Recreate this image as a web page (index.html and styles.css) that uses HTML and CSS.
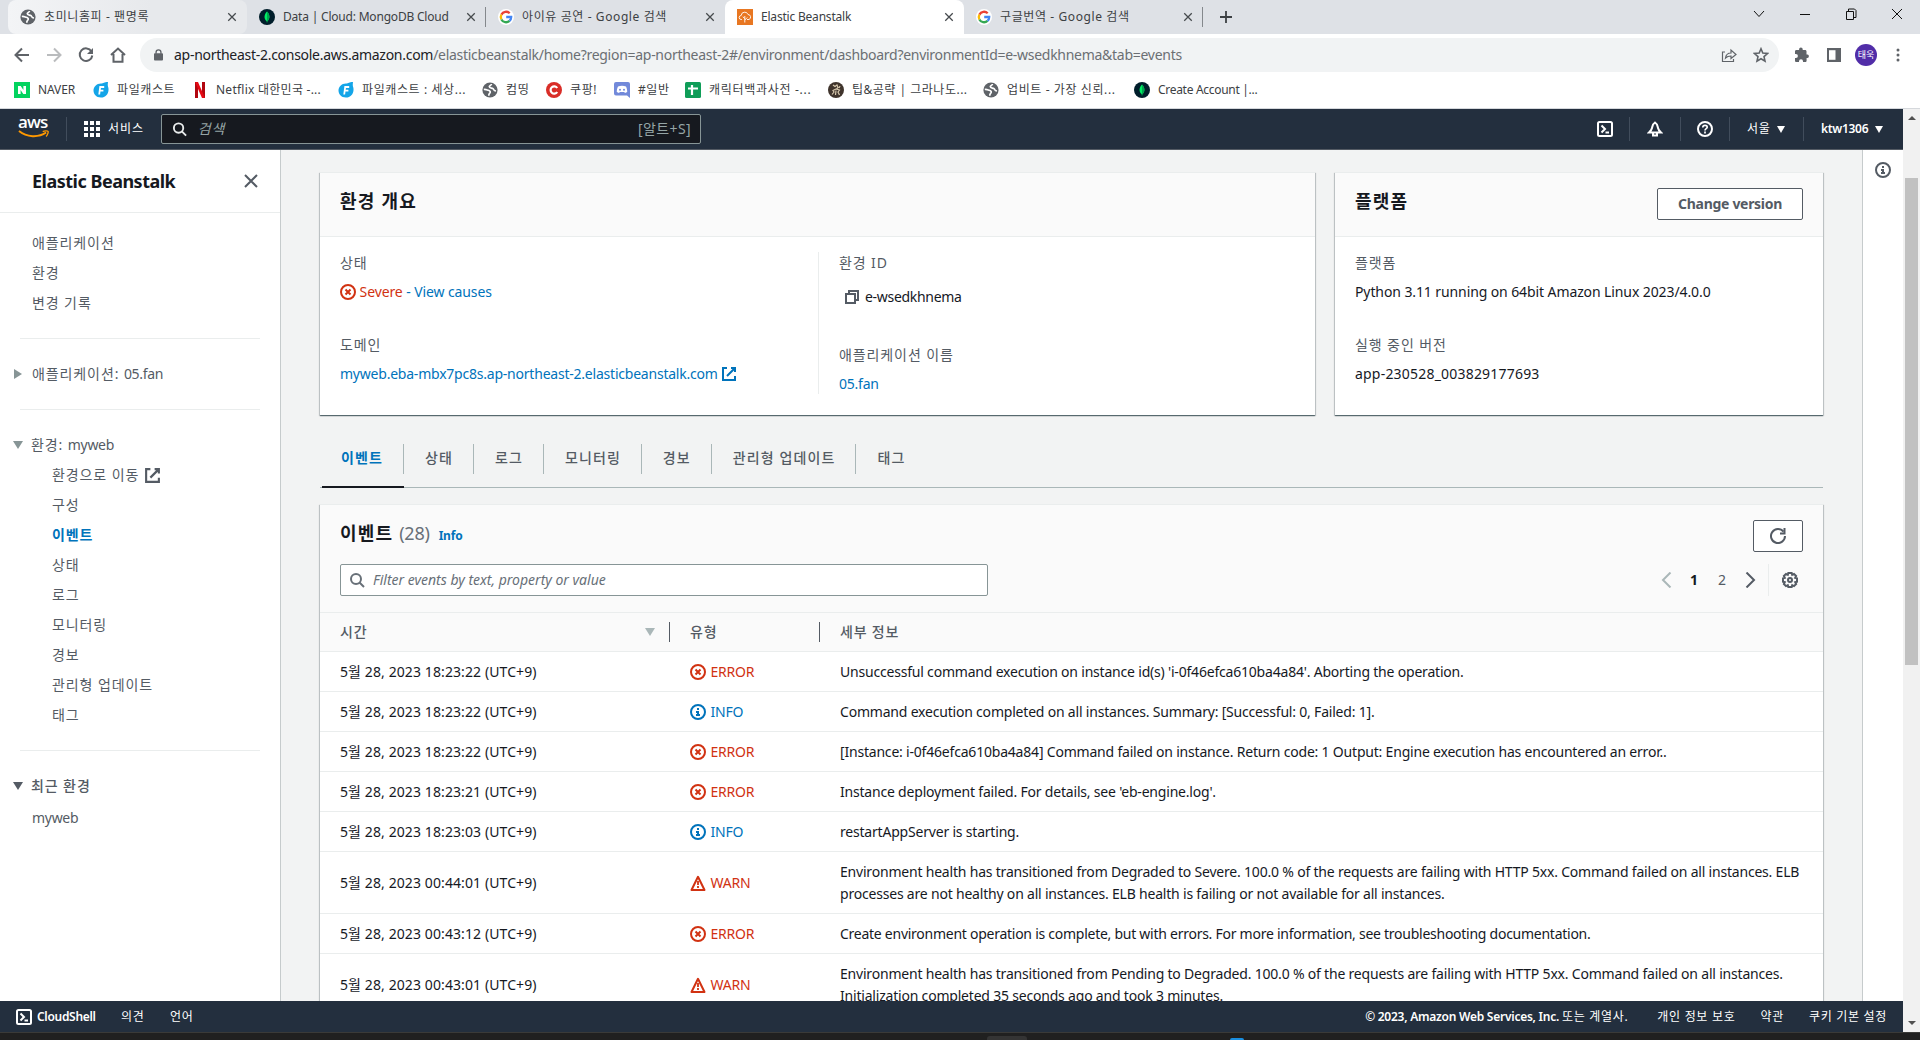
FILE: index.html
```
<!DOCTYPE html>
<html lang="ko">

<head>
    <meta charset="UTF-8">
    <meta name="viewport" content="width=device-width, initial-scale=1.0">
    <title>Elastic Beanstalk</title>
    <link rel="stylesheet" href="styles.css">
</head>

<body>

    <!-- Shared icons -->
    <svg class="sprite" width="0" height="0">
        <symbol id="i-globe" viewBox="0 0 16 16">
            <circle cx="8" cy="8" r="7.6" fill="#5f6368" />
            <path d="M1.800 7.500c1.700-.4 3 .3 4.300.7 1.400.4 2.400.6 2.100 2-.3 1.200-1.600 1.300-1.400 3.600" fill="none" stroke="#fff" stroke-width="1.700" />
            <path d="M9.500 2c-.2 1.600-2.300 1.300-2.200 2.800.1 1.600 2.500 1 3.700 1.800 1 .7.300 2.200 3 2.400" fill="none" stroke="#fff" stroke-width="1.700" />
        </symbol>
        <symbol id="i-mongo" viewBox="0 0 16 16">
            <circle cx="8" cy="8" r="8" fill="#001e2b" />
            <path d="M8 2.500c3.200 3.300 3.200 7.300.4 9.600L8 14l-.4-1.900C4.800 9.800 4.800 5.800 8 2.500z" fill="#00ed64" />
            <path d="M8 2.500v11.500l.4-1.900c2.800-2.300 2.800-6.300-.4-9.600z" fill="#00a84f" />
        </symbol>
        <symbol id="i-google" viewBox="0 0 16 16">
            <circle cx="8" cy="8" r="8" fill="#fff" />
            <g fill="none" stroke-width="2.300">
                <path d="M11.700 4.300A5.200 5.200 0 0 0 3.400 5.600" stroke="#ea4335" />
                <path d="M3.400 5.600a5.200 5.200 0 0 0 0 4.800" stroke="#fbbc05" />
                <path d="M3.400 10.400a5.200 5.200 0 0 0 8.100 1.500" stroke="#34a853" />
                <path d="M11.500 11.900A5.200 5.200 0 0 0 13.200 8H8.200" stroke="#4285f4" />
            </g>
        </symbol>
        <symbol id="i-filecast" viewBox="0 0 16 16">
            <path d="M8 1.500c2.500 0 3-1.300 7-1.500-.2 2.500-.5 3 .3 5.500C16.500 11 13 15.500 8 15.500S.5 12 .5 8.500 3.500 1.500 8 1.500z" fill="#14a5e8" />
            <path d="M6.200 12.500l1-7.500h4M6.800 8.700h3.600" fill="none" stroke="#fff" stroke-width="1.800" />
        </symbol>
        <symbol id="i-close" viewBox="0 0 16 16">
            <path d="M2 2l12 12M14 2L2 14" fill="none" stroke="currentColor" stroke-width="2" />
        </symbol>
        <symbol id="i-search" viewBox="0 0 16 16">
            <circle cx="7" cy="7" r="5" fill="none" stroke="currentColor" stroke-width="2" />
            <path d="M10.500 10.500L15 15" fill="none" stroke="currentColor" stroke-width="2" />
        </symbol>
        <symbol id="i-external" viewBox="0 0 16 16">
            <path d="M10 2h4v4M6 10l8-8" fill="none" stroke="currentColor" stroke-width="2" />
            <path d="M6 2H2v12h12v-4" fill="none" stroke="currentColor" stroke-width="2" />
        </symbol>
        <symbol id="i-error" viewBox="0 0 16 16">
            <circle cx="8" cy="8" r="7" fill="none" stroke="currentColor" stroke-width="2" />
            <path d="M5.500 5.500l5 5M10.500 5.500l-5 5" fill="none" stroke="currentColor" stroke-width="2" />
        </symbol>
        <symbol id="i-info" viewBox="0 0 16 16">
            <circle cx="8" cy="8" r="7" fill="none" stroke="currentColor" stroke-width="2" />
            <path d="M8 11V8H6M10 11H6M8 6V4" fill="none" stroke="currentColor" stroke-width="2" />
        </symbol>
        <symbol id="i-warn" viewBox="0 0 16 16">
            <path d="M8 1.800l6.500 13.200h-13z" fill="none" stroke="currentColor" stroke-width="2" stroke-linejoin="round" />
            <path d="M8 6v4M8 11v2" fill="none" stroke="currentColor" stroke-width="1.800" />
        </symbol>
        <symbol id="i-shell" viewBox="0 0 16 16">
            <rect x="1" y="1" width="14" height="14" rx="1.500" fill="none" stroke="currentColor" stroke-width="2" />
            <path d="M4.500 4.500L8 8l-3.500 3.500M8.500 11.500H12" fill="none" stroke="currentColor" stroke-width="2" />
        </symbol>
    </svg>

    <!-- Browser tabs -->
    <div class="tab-strip">
        <div class="tab tab-hover">
            <svg class="fav"><use href="#i-globe" /></svg>
            <span class="tab-title">초미니홈피 - 팬명록</span>
            <svg class="tab-close"><use href="#i-close" /></svg>
        </div>
        <div class="tab tab-line">
            <svg class="fav"><use href="#i-mongo" /></svg>
            <span class="tab-title latin">Data | Cloud: MongoDB Cloud</span>
            <svg class="tab-close"><use href="#i-close" /></svg>
        </div>
        <div class="tab">
            <svg class="fav"><use href="#i-google" /></svg>
            <span class="tab-title">아이유 공연 - Google 검색</span>
            <svg class="tab-close"><use href="#i-close" /></svg>
        </div>
        <div class="tab tab-active">
            <svg class="fav" viewBox="0 0 16 16">
                <rect width="16" height="16" fill="#e87722" />
                <path d="M5 10.500H4.200a2 2 0 0 1 0-4 3.500 3.500 0 0 1 6.800-1 2.600 2.600 0 0 1 1 5H10M7.800 13.500V7M7.800 9.500L5.800 7.800M7.800 11l2.400-2.500" fill="none" stroke="#fff" stroke-width=".9" />
            </svg>
            <span class="tab-title latin">Elastic Beanstalk</span>
            <svg class="tab-close"><use href="#i-close" /></svg>
        </div>
        <div class="tab tab-line">
            <svg class="fav"><use href="#i-google" /></svg>
            <span class="tab-title">구글번역 - Google 검색</span>
            <svg class="tab-close"><use href="#i-close" /></svg>
        </div>
        <svg class="new-tab" viewBox="0 0 12 12"><path d="M6 0v12M0 6h12" stroke="#3c4043" stroke-width="1.800" /></svg>
        <div class="window-buttons">
            <svg viewBox="0 0 12 12"><path d="M1 3l5 5.500L11 3" /></svg>
            <svg viewBox="0 0 12 12"><path d="M1 6.500h10" /></svg>
            <svg viewBox="0 0 12 12"><path d="M1.500 3.500h7v8h-7zM3.500 3.500v-2.500h6l1.500 1.500v7h-2" /></svg>
            <svg viewBox="0 0 12 12"><path d="M1 1l10 10M11 1L1 11" /></svg>
        </div>
    </div>

    <!-- Address bar -->
    <div class="toolbar">
        <svg class="nav-icon" viewBox="0 0 16 16"><path d="M15 8H2M8 1.500L1.500 8 8 14.500" /></svg>
        <svg class="nav-icon disabled" viewBox="0 0 16 16"><path d="M1 8h13M8 1.500L14.500 8 8 14.500" /></svg>
        <svg class="nav-icon" viewBox="0 0 16 16"><path d="M13.500 4.500A6.300 6.300 0 1 0 14.300 8.500" /><path d="M15 1v6H9z" fill="#5f6368" stroke="none" /></svg>
        <svg class="nav-icon" viewBox="0 0 16 16"><path d="M1 8l7-6.500L15 8M3.500 7v7.800h9V7" /></svg>
        <div class="omnibox">
            <svg class="lock" viewBox="0 0 10 13"><rect y="4.500" width="10" height="8" rx="1" fill="#5f6368" /><path d="M2.300 5V3.500a2.700 2.700 0 0 1 5.400 0V5" fill="none" stroke="#5f6368" stroke-width="1.500" /></svg>
            <span class="url"><b>ap-northeast-2.console.aws.amazon.com</b>/elasticbeanstalk/home?region=ap-northeast-2#/environment/dashboard?environmentId=e-wsedkhnema&amp;tab=events</span>
            <svg class="box-icon" viewBox="0 0 16 16"><path d="M4 5H1.500v9.500h11V12M4.500 11C5 7.500 7 6 10 6V3l5 4.500-5 4V9C7.500 9 6 9.500 4.500 11z" /></svg>
            <svg class="box-icon star" viewBox="0 0 16 16"><path d="M8 1.800l1.800 4.300 4.700.4-3.500 3.100 1 4.600-4-2.400-4 2.400 1-4.600-3.500-3.100 4.700-.4z" /></svg>
        </div>
        <svg class="tool puzzle" viewBox="0 0 16 16"><path d="M13.500 7.500h-1V4.500c0-.8-.6-1.400-1.400-1.400H8.700V2.200a1.800 1.800 0 0 0-3.600 0v.9H2.400C1.600 3.100 1 3.700 1 4.500v2.600h.9a2 2 0 0 1 0 4H1v2.600c0 .8.6 1.400 1.400 1.400H5v-.9a2 2 0 0 1 4 0v.9h2.200c.8 0 1.400-.6 1.400-1.400V11h.9a1.800 1.800 0 0 0 0-3.500z" fill="#5f6368" /></svg>
        <svg class="tool" viewBox="0 0 16 16"><path d="M1 1h14v14H1z" fill="#5f6368" /><path d="M3 3.200h6.500v9.600H3z" fill="#fff" /></svg>
        <span class="avatar">태욱</span>
        <svg class="dots" viewBox="0 0 4 14"><circle cx="2" cy="2" r="1.500" /><circle cx="2" cy="7" r="1.500" /><circle cx="2" cy="12" r="1.500" /></svg>
    </div>

    <!-- Bookmarks -->
    <div class="bookmarks">
        <a class="bm bm-naver"><svg viewBox="0 0 16 16"><path d="M0 0h16v16H0z" fill="#03d35f" /><path d="M4 12V4h2.700l2.700 4V4H12v8H9.300L6.600 8v4z" fill="#fff" /></svg>NAVER</a>
        <a class="bm bm-file"><svg><use href="#i-filecast" /></svg>파일캐스트</a>
        <a class="bm bm-netflix"><svg viewBox="0 0 10 16"><path d="M0 0h3v16H0zM7 0h3v16H7z" fill="#b1060f" /><path d="M0 0h3l7 16H7z" fill="#e50914" /></svg>Netflix 대한민국 -...</a>
        <a class="bm bm-file2"><svg><use href="#i-filecast" /></svg>파일캐스트 : 세상...</a>
        <a class="bm bm-com"><svg><use href="#i-globe" /></svg>컴띵</a>
        <a class="bm bm-coupang"><svg viewBox="0 0 16 16"><circle cx="8" cy="8" r="8" fill="#d92d27" /><path d="M11.200 6A3.600 3.600 0 1 0 11.200 10" fill="none" stroke="#fff" stroke-width="2.200" /></svg>쿠팡!</a>
        <a class="bm bm-discord"><svg viewBox="0 0 16 16"><path d="M2 0h12a2 2 0 0 1 2 2v14l-3-2.500H2a2 2 0 0 1-2-2V2a2 2 0 0 1 2-2z" fill="#7289da" /><path d="M4 4.500c2.500-1 5.500-1 8 0 1 2 1.300 4 1.200 5.500l-2.200 1-.8-1H5.800l-.8 1-2.200-1C2.700 8.500 3 6.500 4 4.500z" fill="#fff" /><circle cx="6" cy="7.700" r="1" fill="#7289da" /><circle cx="10" cy="7.700" r="1" fill="#7289da" /></svg>#일반</a>
        <a class="bm bm-sheet"><svg viewBox="0 0 16 16"><rect width="16" height="16" rx="1.500" fill="#0f9d58" /><path d="M7 3v10M3 6.500h10" stroke="#fff" stroke-width="2.200" /></svg>캐릭터백과사전 -...</a>
        <a class="bm bm-lion"><svg viewBox="0 0 16 16"><circle cx="8" cy="8" r="8" fill="#3f342c" /><path d="M5 3l2 1.500L9 3l1 2.500L8.500 7l3 1-1.500 2 1.500 3M8 7l-3 1.500 1 1.500-2 2.500M8 8.500L7.500 13M12 4l-1 2" fill="none" stroke="#d8c9ae" stroke-width="1.200" /></svg>팁&amp;공략 | 그라나도...</a>
        <a class="bm bm-upbit"><svg><use href="#i-globe" /></svg>업비트 - 가장 신뢰...</a>
        <a class="bm bm-mongo"><svg><use href="#i-mongo" /></svg>Create Account |...</a>
    </div>

    <div class="viewport">
        <div class="page">

            <!-- AWS navigation -->
            <header class="aws-nav">
                <div class="aws-logo">
                    <span>aws</span>
                    <svg viewBox="0 0 32 9"><path d="M1 1c8 6.500 20 7 28 1.500" fill="none" stroke="#ff9900" stroke-width="2" /><path d="M25.500 1.500c2-.9 5-.9 5.500-.2s-.4 3.700-2 5.200" fill="none" stroke="#ff9900" stroke-width="1.400" /></svg>
                </div>
                <div class="services">
                    <svg viewBox="0 0 16 16"><path d="M0 0h4v4H0zM6 0h4v4H6zM12 0h4v4h-4zM0 6h4v4H0zM6 6h4v4H6zM12 6h4v4h-4zM0 12h4v4H0zM6 12h4v4H6zM12 12h4v4h-4z" fill="#fff" /></svg>
                    <span>서비스</span>
                </div>
                <div class="aws-search">
                    <svg><use href="#i-search" /></svg>
                    <em>검색</em>
                    <span>[알트+S]</span>
                </div>
                <div class="aws-tools">
                    <div class="t-shell"><svg><use href="#i-shell" /></svg></div>
                    <div class="t-bell"><svg viewBox="0 0 16 16"><path d="M8 1.500c-2.500 1.500-2.500 3-3 5.500-.4 2-1.500 3-3 4.500h12c-1.500-1.500-2.600-2.500-3-4.500-.5-2.500-.5-4-3-5.500zM6 12v2.500h4V12" fill="none" stroke="currentColor" stroke-width="2" /></svg></div>
                    <div class="t-help"><svg viewBox="0 0 16 16"><circle cx="8" cy="8" r="7" fill="none" stroke="currentColor" stroke-width="2" /><path d="M5.800 6.500C5.800 3.500 10.300 3.700 10.200 6.200 10.200 7.700 8 7.500 8 9.500M8 10.500v2" fill="none" stroke="currentColor" stroke-width="1.700" /></svg></div>
                    <div class="t-region">서울<i></i></div>
                    <div class="t-user">ktw1306<i></i></div>
                </div>
            </header>

            <div class="layout">

                <!-- Side navigation -->
                <aside class="sidebar">
                    <div class="side-head">
                        <h2>Elastic Beanstalk</h2>
                        <svg><use href="#i-close" /></svg>
                    </div>
                    <nav>
                        <a>애플리케이션</a>
                        <a>환경</a>
                        <a>변경 기록</a>
                        <hr>
                        <div class="group"><i class="arrow right"></i>애플리케이션: <span class="latin">05.fan</span></div>
                        <hr>
                        <div class="group"><i class="arrow down"></i>환경: <span class="latin">myweb</span></div>
                        <a class="sub">환경으로 이동 <svg><use href="#i-external" /></svg></a>
                        <a class="sub">구성</a>
                        <a class="sub current">이벤트</a>
                        <a class="sub">상태</a>
                        <a class="sub">로그</a>
                        <a class="sub">모니터링</a>
                        <a class="sub">경보</a>
                        <a class="sub">관리형 업데이트</a>
                        <a class="sub">태그</a>
                        <hr>
                        <div class="group dark"><i class="arrow down"></i>최근 환경</div>
                        <a class="recent latin">myweb</a>
                    </nav>
                </aside>

                <main>
                    <div class="cards">
                        <section class="card overview">
                            <div class="card-head"><h3>환경 개요</h3></div>
                            <div class="overview-body">
                                <dl>
                                    <dt>상태</dt>
                                    <dd class="status"><svg><use href="#i-error" /></svg> Severe <a>- View causes</a></dd>
                                    <dt>도메인</dt>
                                    <dd><a>myweb.eba-mbx7pc8s.ap-northeast-2.elasticbeanstalk.com <svg><use href="#i-external" /></svg></a></dd>
                                </dl>
                                <dl class="second">
                                    <dt>환경 ID</dt>
                                    <dd class="env-id"><svg viewBox="0 0 16 16"><path d="M2 5h9v9H2zM5 5V2h9v9h-3" fill="none" stroke="currentColor" stroke-width="2" /></svg>e-wsedkhnema</dd>
                                    <dt>애플리케이션 이름</dt>
                                    <dd><a>05.fan</a></dd>
                                </dl>
                            </div>
                        </section>
                        <section class="card platform">
                            <div class="card-head"><h3>플랫폼</h3><button type="button">Change version</button></div>
                            <dl>
                                <dt>플랫폼</dt>
                                <dd class="platform-name">Python 3.11 running on 64bit Amazon Linux 2023/4.0.0</dd>
                                <dt>실행 중인 버전</dt>
                                <dd class="version">app-230528_003829177693</dd>
                            </dl>
                        </section>
                    </div>

                    <div class="tabs">
                        <a class="active">이벤트</a>
                        <a>상태</a>
                        <a>로그</a>
                        <a>모니터링</a>
                        <a>경보</a>
                        <a>관리형 업데이트</a>
                        <a>태그</a>
                    </div>

                    <!-- Events table -->
                    <section class="card events">
                        <div class="events-head">
                            <h3>이벤트 <span class="count">(28)</span> <a>Info</a></h3>
                            <button type="button" class="refresh"><svg viewBox="0 0 16 16"><path d="M13.500 3.700A7 7 0 1 0 15 8" /><path d="M10 5.500h4.500V0" /></svg></button>
                        </div>
                        <div class="events-filter">
                            <div class="filter"><svg><use href="#i-search" /></svg><em>Filter events by text, property or value</em></div>
                            <div class="pager">
                                <svg class="off" viewBox="0 0 16 16"><path d="M11.500 .5L4 8l7.500 7.500" /></svg>
                                <b>1</b>
                                <span>2</span>
                                <svg viewBox="0 0 16 16"><path d="M4.500 .5L12 8l-7.500 7.500" /></svg>
                            </div>
                            <div class="settings"><svg viewBox="0 0 16 16"><path d="M6.300 1h3.400l.5 1.800L12 1.900 14.100 4l-.9 1.800 1.800.5v3.400l-1.800.5.9 1.800-2.100 2.100-1.800-.9-.5 1.800H6.300l-.5-1.800-1.800.9L1.900 12l.9-1.800L1 9.700V6.300l1.800-.5L1.900 4 4 1.900l1.800.9z" /><circle cx="8" cy="8" r="2" /></svg></div>
                        </div>
                        <table>
                            <thead>
                                <tr>
                                    <th class="c-time"><div>시간<i></i></div></th>
                                    <th class="c-type"><div>유형</div></th>
                                    <th>세부 정보</th>
                                </tr>
                            </thead>
                            <tbody>
                                <tr>
                                    <td>5월 28, 2023 18:23:22 (UTC+9)</td>
                                    <td class="error"><svg><use href="#i-error" /></svg> ERROR</td>
                                    <td>Unsuccessful command execution on instance id(s) 'i-0f46efca610ba4a84'. Aborting the operation.</td>
                                </tr>
                                <tr>
                                    <td>5월 28, 2023 18:23:22 (UTC+9)</td>
                                    <td class="info"><svg><use href="#i-info" /></svg> INFO</td>
                                    <td>Command execution completed on all instances. Summary: [Successful: 0, Failed: 1].</td>
                                </tr>
                                <tr>
                                    <td>5월 28, 2023 18:23:22 (UTC+9)</td>
                                    <td class="error"><svg><use href="#i-error" /></svg> ERROR</td>
                                    <td>[Instance: i-0f46efca610ba4a84] Command failed on instance. Return code: 1 Output: Engine execution has encountered an error..</td>
                                </tr>
                                <tr>
                                    <td>5월 28, 2023 18:23:21 (UTC+9)</td>
                                    <td class="error"><svg><use href="#i-error" /></svg> ERROR</td>
                                    <td>Instance deployment failed. For details, see 'eb-engine.log'.</td>
                                </tr>
                                <tr>
                                    <td>5월 28, 2023 18:23:03 (UTC+9)</td>
                                    <td class="info"><svg><use href="#i-info" /></svg> INFO</td>
                                    <td>restartAppServer is starting.</td>
                                </tr>
                                <tr>
                                    <td>5월 28, 2023 00:44:01 (UTC+9)</td>
                                    <td class="error"><svg><use href="#i-warn" /></svg> WARN</td>
                                    <td>Environment health has transitioned from Degraded to Severe. 100.0 % of the requests are failing with HTTP 5xx. Command failed on all instances. ELB<br>processes are not healthy on all instances. ELB health is failing or not available for all instances.</td>
                                </tr>
                                <tr>
                                    <td>5월 28, 2023 00:43:12 (UTC+9)</td>
                                    <td class="error"><svg><use href="#i-error" /></svg> ERROR</td>
                                    <td class="tight">Create environment operation is complete, but with errors. For more information, see troubleshooting documentation.</td>
                                </tr>
                                <tr>
                                    <td>5월 28, 2023 00:43:01 (UTC+9)</td>
                                    <td class="error"><svg><use href="#i-warn" /></svg> WARN</td>
                                    <td>Environment health has transitioned from Pending to Degraded. 100.0 % of the requests are failing with HTTP 5xx. Command failed on all instances.<br>Initialization completed 35 seconds ago and took 3 minutes.</td>
                                </tr>
                            </tbody>
                        </table>
                    </section>
                </main>

                <aside class="help-panel"><svg><use href="#i-info" /></svg></aside>
            </div>

            <!-- Footer -->
            <footer class="aws-footer">
                <span class="f-shell"><svg><use href="#i-shell" /></svg>CloudShell</span>
                <span class="f-opinion">의견</span>
                <span>언어</span>
                <span class="copyright">© 2023, Amazon Web Services, Inc. <small>또는 계열사.</small></span>
                <span class="f-privacy">개인 정보 보호</span>
                <span class="f-terms">약관</span>
                <span>쿠키 기본 설정</span>
            </footer>
        </div>

        <div class="scrollbar">
            <i class="up"></i>
            <div class="thumb"></div>
            <i class="down"></i>
        </div>
    </div>

    <div class="taskbar"><i class="task"></i><i class="task-blue"></i></div>

</body>

</html>
```
FILE: styles.css
```
* {
    box-sizing: border-box;
}

body {
    margin: 0;
    width: 1920px;
    height: 1040px;
    overflow: hidden;
    display: flex;
    flex-direction: column;
    font-family: "Noto Sans", "Noto Sans CJK KR", sans-serif;
    font-size: 14px;
    line-height: 22px;
    color: #16191f;
    background: #fff;
}

h2, h3, dl, dt, dd {
    margin: 0;
}

svg {
    flex: none;
    width: 16px;
    height: 16px;
}

.sprite {
    position: absolute;
    width: 0;
    height: 0;
}

/* Browser tabs */
.tab-strip {
    flex: none;
    height: 34px;
    padding-left: 8px;
    background: #dee1e6;
    display: flex;
    align-items: center;
}

.tab {
    width: 239px;
    height: 34px;
    padding: 0 10px 0 12px;
    display: flex;
    align-items: center;
    font-size: 12px;
    letter-spacing: 0.6px;
    color: #3c4043;
    white-space: nowrap;
}

.tab-title {
    flex: 1;
    padding-left: 8px;
}

.tab-title.latin {
    letter-spacing: -0.2px;
}

.tab-close {
    width: 10px;
    height: 10px;
    color: #45494d;
}

.tab-hover {
    background: linear-gradient(90deg, #f3f4f6, #e7e9ec 60%);
    border-radius: 8px;
}

.tab-active {
    background: #fff;
    border-radius: 8px 8px 0 0;
}

.tab-line {
    background: linear-gradient(#84888c, #84888c) right center / 1px 20px no-repeat;
}

.new-tab {
    width: 12px;
    height: 12px;
    margin-left: 17px;
}

.window-buttons {
    margin-left: auto;
    padding: 0 17px 6px 0;
    display: flex;
    gap: 34px;
}

.window-buttons svg {
    width: 12px;
    height: 12px;
    fill: none;
    stroke: #111;
    stroke-width: 1;
}

/* Address bar */
.toolbar {
    flex: none;
    height: 42px;
    padding: 0 20px 0 14px;
    display: flex;
    align-items: center;
}

.nav-icon {
    margin-right: 16px;
    fill: none;
    stroke: #5f6368;
    stroke-width: 2;
}

.nav-icon.disabled {
    stroke: #babcbe;
}

.omnibox {
    width: 1640px;
    height: 34px;
    margin-left: -2px;
    padding: 0 10px 0 14px;
    border-radius: 17px;
    background: #f1f3f4;
    display: flex;
    align-items: center;
}

.lock {
    width: 9px;
    height: 12px;
    margin-right: 11px;
}

.url {
    flex: 1;
    letter-spacing: -0.28px;
    color: #6b6f73;
    white-space: nowrap;
}

.url b {
    font-weight: normal;
    color: #202124;
}

.box-icon {
    margin-left: 16px;
    fill: none;
    stroke: #5f6368;
    stroke-width: 1.2;
}

.box-icon.star {
    stroke-width: 1.6;
}

.tool {
    margin-left: 16px;
}

.tool.puzzle {
    margin-left: 15px;
}

.avatar {
    width: 22px;
    height: 22px;
    margin-left: 13px;
    border-radius: 50%;
    background: #512da8;
    color: #fff;
    font-size: 9px;
    line-height: 21px;
    text-align: center;
}

.dots {
    width: 4px;
    height: 14px;
    margin-left: 19px;
    fill: #5f6368;
}

/* Bookmarks */
.bookmarks {
    flex: none;
    height: 33px;
    padding: 0 0 5px 14px;
    border-bottom: 1px solid #d5d8dc;
    display: flex;
    align-items: center;
    font-size: 12px;
    letter-spacing: 0.6px;
    color: #3c4043;
}

.bm {
    display: flex;
    align-items: center;
    gap: 8px;
    white-space: nowrap;
}

.bm-naver { width: 79px; letter-spacing: -0.1px; }
.bm-file { width: 102px; }
.bm-netflix { width: 143px; letter-spacing: 0.25px; gap: 11px; }
.bm-netflix svg { width: 10px; }
.bm-file2 { width: 144px; }
.bm-com { width: 64px; }
.bm-coupang { width: 68px; }
.bm-discord { width: 71px; }
.bm-sheet { width: 143px; letter-spacing: 0.7px; }
.bm-lion { width: 155px; letter-spacing: 0.5px; }
.bm-upbit { width: 151px; }
.bm-mongo { letter-spacing: -0.3px; }

/* Page and scrollbar */
.viewport {
    flex: none;
    height: 923px;
    display: flex;
}

.page {
    width: 1903px;
    display: flex;
    flex-direction: column;
}

.scrollbar {
    width: 17px;
    background: #f1f1f1;
    display: flex;
    flex-direction: column;
    align-items: center;
}

.scrollbar .up,
.scrollbar .down {
    border: 4px solid transparent;
}

.scrollbar .up {
    margin-top: 3px;
    border-bottom-color: #505050;
}

.scrollbar .down {
    margin-top: auto;
    margin-bottom: 3px;
    border-top-color: #505050;
}

.thumb {
    width: 13px;
    height: 487px;
    margin-top: 58px;
    background: #c1c1c1;
}

/* AWS navigation */
.aws-nav {
    flex: none;
    height: 41px;
    padding-left: 18px;
    border-bottom: 1px solid #545b64;
    background: #232f3e;
    color: #fff;
    display: flex;
    align-items: center;
}

.aws-logo {
    width: 49px;
    height: 24px;
    border-right: 1px solid #414d5c;
    display: flex;
    flex-direction: column;
    font-family: "Open Sans", sans-serif;
    font-weight: 600;
    font-size: 17px;
    line-height: 16px;
    letter-spacing: -0.9px;
}

.aws-logo span {
    margin-top: -3px;
}

.aws-logo svg {
    width: 31px;
    height: 9px;
}

.services {
    width: 94px;
    padding-left: 17px;
    display: flex;
    align-items: center;
    gap: 8px;
    font-size: 12px;
    letter-spacing: 1px;
}

.aws-search {
    width: 540px;
    height: 30px;
    padding: 0 9px 0 10px;
    border: 1px solid #879596;
    border-radius: 2px;
    background: #16191f;
    color: #95a5a6;
    display: flex;
    align-items: center;
    letter-spacing: 0.4px;
}

.aws-search svg {
    width: 15px;
    color: #eaeded;
}

.aws-search em {
    margin: 0 auto 0 12px;
    letter-spacing: 0.8px;
    font-style: normal;
    transform: skewX(-14deg);
}

.aws-tools {
    margin-left: auto;
    display: flex;
    align-items: center;
    font-size: 12px;
    line-height: 24px;
}

.aws-tools div {
    height: 24px;
    border-left: 1px solid #414d5c;
    display: flex;
    align-items: center;
    white-space: nowrap;
}

.aws-tools .t-shell {
    width: 32px;
    border: 0;
}

.t-bell,
.t-help {
    padding-left: 17px;
}

.t-bell { width: 51px; }
.t-help { width: 49px; padding-left: 16px; }

.t-region {
    width: 74px;
    padding-left: 17px;
    letter-spacing: 0.8px;
}

.t-user {
    width: 100px;
    padding-left: 17px;
    font-weight: 600;
    letter-spacing: -0.3px;
}

.aws-tools i {
    margin-left: 6px;
    border: 4px solid transparent;
    border-top: 7px solid #fff;
    border-bottom: 0;
}

.aws-tools .t-user i {
    margin-left: 7px;
}

/* Layout */
.layout {
    flex: 1;
    min-height: 0;
    overflow: hidden;
    display: flex;
    align-items: stretch;
}

.sidebar {
    flex: none;
    width: 281px;
    border-right: 1px solid #c6cbcc;
    background: #fff;
    color: #545b64;
}

.side-head {
    height: 63px;
    padding: 0 21px 0 32px;
    border-bottom: 1px solid #eaeded;
    display: flex;
    align-items: center;
    justify-content: space-between;
}

.side-head h2 {
    font-size: 18px;
    letter-spacing: -0.5px;
    color: #16191f;
}

.sidebar nav {
    padding-top: 15px;
    letter-spacing: 0.9px;
}

.sidebar nav a,
.group {
    height: 30px;
    padding-left: 32px;
    display: flex;
    align-items: center;
    white-space: pre;
}

.sidebar nav a.sub {
    padding-left: 52px;
}

.sidebar nav a.current {
    color: #0073bb;
    font-weight: bold;
}

.sidebar nav a.recent {
    margin-top: 2px;
}

.sidebar nav svg {
    width: 17px;
    height: 17px;
}

.sidebar .latin {
    letter-spacing: -0.3px;
}

.sidebar hr {
    width: 240px;
    height: 1px;
    margin: 20px;
    border: 0;
    background: #eaeded;
}

.group {
    padding-left: 14px;
}

.group.dark {
    font-weight: 500;
}

.arrow {
    width: 10px;
    margin-right: 8px;
}

.arrow.right {
    border: 5px solid transparent;
    border-left: 8px solid #879596;
    border-right: 0;
}

.arrow.down {
    border: 5px solid transparent;
    border-top: 8px solid #879596;
    border-bottom: 0;
    margin-left: -1px;
}

.group.dark .arrow {
    border-top-color: #545b64;
}

main {
    flex: 1;
    min-width: 0;
    padding: 22px 39px 0 39px;
    background: #f2f3f3;
}

.help-panel {
    flex: none;
    width: 41px;
    padding: 12px 0 0 12px;
    border-left: 1px solid #c6cbcc;
    background: #fff;
    color: #545b64;
}

/* Cards */
.card {
    border-top: 1px solid #eaeded;
    background: #fff;
    box-shadow: 0 1px 1px 0 rgba(0, 28, 36, 0.5), 1px 1px 1px 0 rgba(0, 28, 36, 0.15), -1px 1px 1px 0 rgba(0, 28, 36, 0.15);
}

.card a {
    color: #0073bb;
}

.card h3 {
    font-size: 18px;
    line-height: 26px;
    letter-spacing: 1.2px;
}

.cards {
    height: 243px;
    display: flex;
    gap: 20px;
}

.overview {
    width: 995px;
}

.platform {
    flex: 1;
}

.card-head {
    height: 64px;
    padding: 0 20px 2px;
    border-bottom: 1px solid #eaeded;
    background: #fafafa;
    display: flex;
    align-items: center;
    justify-content: space-between;
}

.card-head h3 {
    padding-bottom: 5px;
}

button {
    height: 32px;
    padding: 0 20px;
    border: 1px solid #545b64;
    border-radius: 2px;
    background: #fff;
    color: #545b64;
    font-family: inherit;
    font-size: 14px;
    font-weight: bold;
    letter-spacing: -0.3px;
}

.overview-body {
    padding-top: 15px;
    display: flex;
}

.card dl {
    padding: 15px 20px 0;
}

.overview-body dl {
    flex: none;
    width: 498px;
    height: 142px;
    padding-top: 0;
}

.card dl.second {
    width: 497px;
    border-left: 1px solid #eaeded;
}

dt {
    color: #545b64;
    letter-spacing: 0.9px;
}

dd {
    height: 22px;
    margin: 7px 0 31px;
    display: flex;
    align-items: center;
    letter-spacing: -0.22px;
    white-space: pre;
}

dd a {
    display: flex;
    align-items: center;
}

dd.status {
    color: #d13212;
    letter-spacing: -0.1px;
}

dd.env-id {
    height: 32px;
    padding-left: 4px;
    letter-spacing: -0.3px;
}

dd.env-id svg {
    margin-right: 4px;
    width: 18px;
    color: #545b64;
}

dd.platform-name {
    letter-spacing: -0.1px;
}

dd.version {
    letter-spacing: 0.2px;
}

/* Tabs */
.tabs {
    height: 73px;
    padding: 29px 0 13px;
    border-bottom: 1px solid #aab7b8;
    display: flex;
    margin-bottom: 16px;
}

.tabs a {
    height: 30px;
    padding: 0 20px 0 21px;
    border-left: 1px solid #aab7b8;
    color: #545b64;
    font-weight: 500;
    line-height: 28px;
    letter-spacing: 1.1px;
}

.tabs a.active {
    width: 82px;
    height: 44px;
    margin-left: 2px;
    margin-right: -1px;
    padding-left: 19px;
    border-left: 0;
    border-bottom: 2px solid #16191f;
    color: #0073bb;
    font-weight: bold;
}

/* Events */
.events-head,
.events-filter {
    padding: 0 20px;
    background: #fafafa;
    display: flex;
    align-items: center;
}

.events-head {
    height: 55px;
    padding-top: 6px;
    justify-content: space-between;
}

.events-head h3 {
    padding-bottom: 2px;
}

.events-head .count {
    font-weight: normal;
    letter-spacing: -0.2px;
    color: #687078;
}

.events-head a {
    padding-left: 3px;
    font-size: 12px;
    letter-spacing: -0.2px;
}

.refresh {
    width: 50px;
    padding: 0;
    display: flex;
    align-items: center;
    justify-content: center;
}

.refresh svg,
.pager svg,
.settings svg {
    fill: none;
    stroke: #545b64;
    stroke-width: 2;
}

.events-filter {
    height: 53px;
    padding-bottom: 12px;
    border-bottom: 1px solid #eaeded;
}

.filter {
    width: 648px;
    height: 32px;
    padding: 0 8px;
    border: 1px solid #879596;
    border-radius: 2px;
    background: #fff;
    color: #687078;
    display: flex;
    align-items: center;
    gap: 8px;
}

.pager {
    margin-left: auto;
    display: flex;
    align-items: center;
}

.pager b,
.pager span {
    width: 28px;
    text-align: center;
}

.pager b {
    margin-left: 5px;
}

.pager span {
    margin-right: 6px;
    color: #545b64;
}

.pager .off {
    stroke: #aab7b8;
}

.settings {
    height: 32px;
    margin-left: 10px;
    padding: 8px 5px 0 13px;
    border-left: 1px solid #eaeded;
    line-height: 0;
}

table {
    width: 100%;
    table-layout: fixed;
    border-collapse: separate;
    border-spacing: 0;
}

th {
    height: 39px;
    padding: 0 20px;
    background: #fafafa;
    border-bottom: 1px solid #eaeded;
    color: #545b64;
    font-weight: 500;
    letter-spacing: 0.8px;
    text-align: left;
}

.c-time { width: 350px; }
.c-type { width: 150px; }

.c-time,
.c-type {
    padding-right: 0;
}

th div {
    height: 20px;
    border-right: 1px solid #545b64;
    display: flex;
    align-items: center;
    justify-content: space-between;
}

th i {
    margin-right: 14px;
    border: 5px solid transparent;
    border-top: 8px solid #aab7b8;
    border-bottom: 0;
}

td {
    padding: 9px 0 8px 20px;
    border-bottom: 1px solid #eaeded;
    letter-spacing: -0.2px;
    white-space: nowrap;
}

td:first-child {
    letter-spacing: 0.1px;
}

td.tight {
    letter-spacing: -0.26px;
}

td svg {
    margin-right: 1px;
    vertical-align: -3px;
}

.error {
    color: #d13212;
}

.info {
    color: #0073bb;
}

/* Footer */
.aws-footer {
    flex: none;
    height: 31px;
    padding: 0 16px;
    background: #232f3e;
    color: #fff;
    display: flex;
    align-items: center;
    font-size: 12px;
    letter-spacing: 0.7px;
}

.aws-footer span {
    display: flex;
    align-items: center;
}

.f-shell {
    width: 105px;
    gap: 5px;
    font-weight: 600;
    letter-spacing: -0.3px;
}

.f-opinion {
    width: 49px;
}

.aws-footer .copyright {
    margin-left: auto;
    margin-right: 29px;
    font-weight: 600;
    letter-spacing: -0.25px;
    white-space: pre;
}

.copyright small {
    font-size: 12px;
    font-weight: normal;
    letter-spacing: 0.7px;
}

.f-privacy {
    margin-right: 25px;
}

.f-terms {
    margin-right: 25px;
}

/* Taskbar */
.taskbar {
    flex: 1;
    background: #202020;
    border-top: 1px solid #3a3a38;
    display: flex;
    align-items: flex-end;
    overflow: hidden;
}

.task {
    width: 40px;
    height: 4px;
    margin-left: 987px;
    border-radius: 3px 3px 0 0;
    background: #343434;
}

.task-blue {
    width: 14px;
    height: 2px;
    margin-left: 203px;
    border-radius: 7px 7px 0 0;
    background: #1a8fe0;
}
```
